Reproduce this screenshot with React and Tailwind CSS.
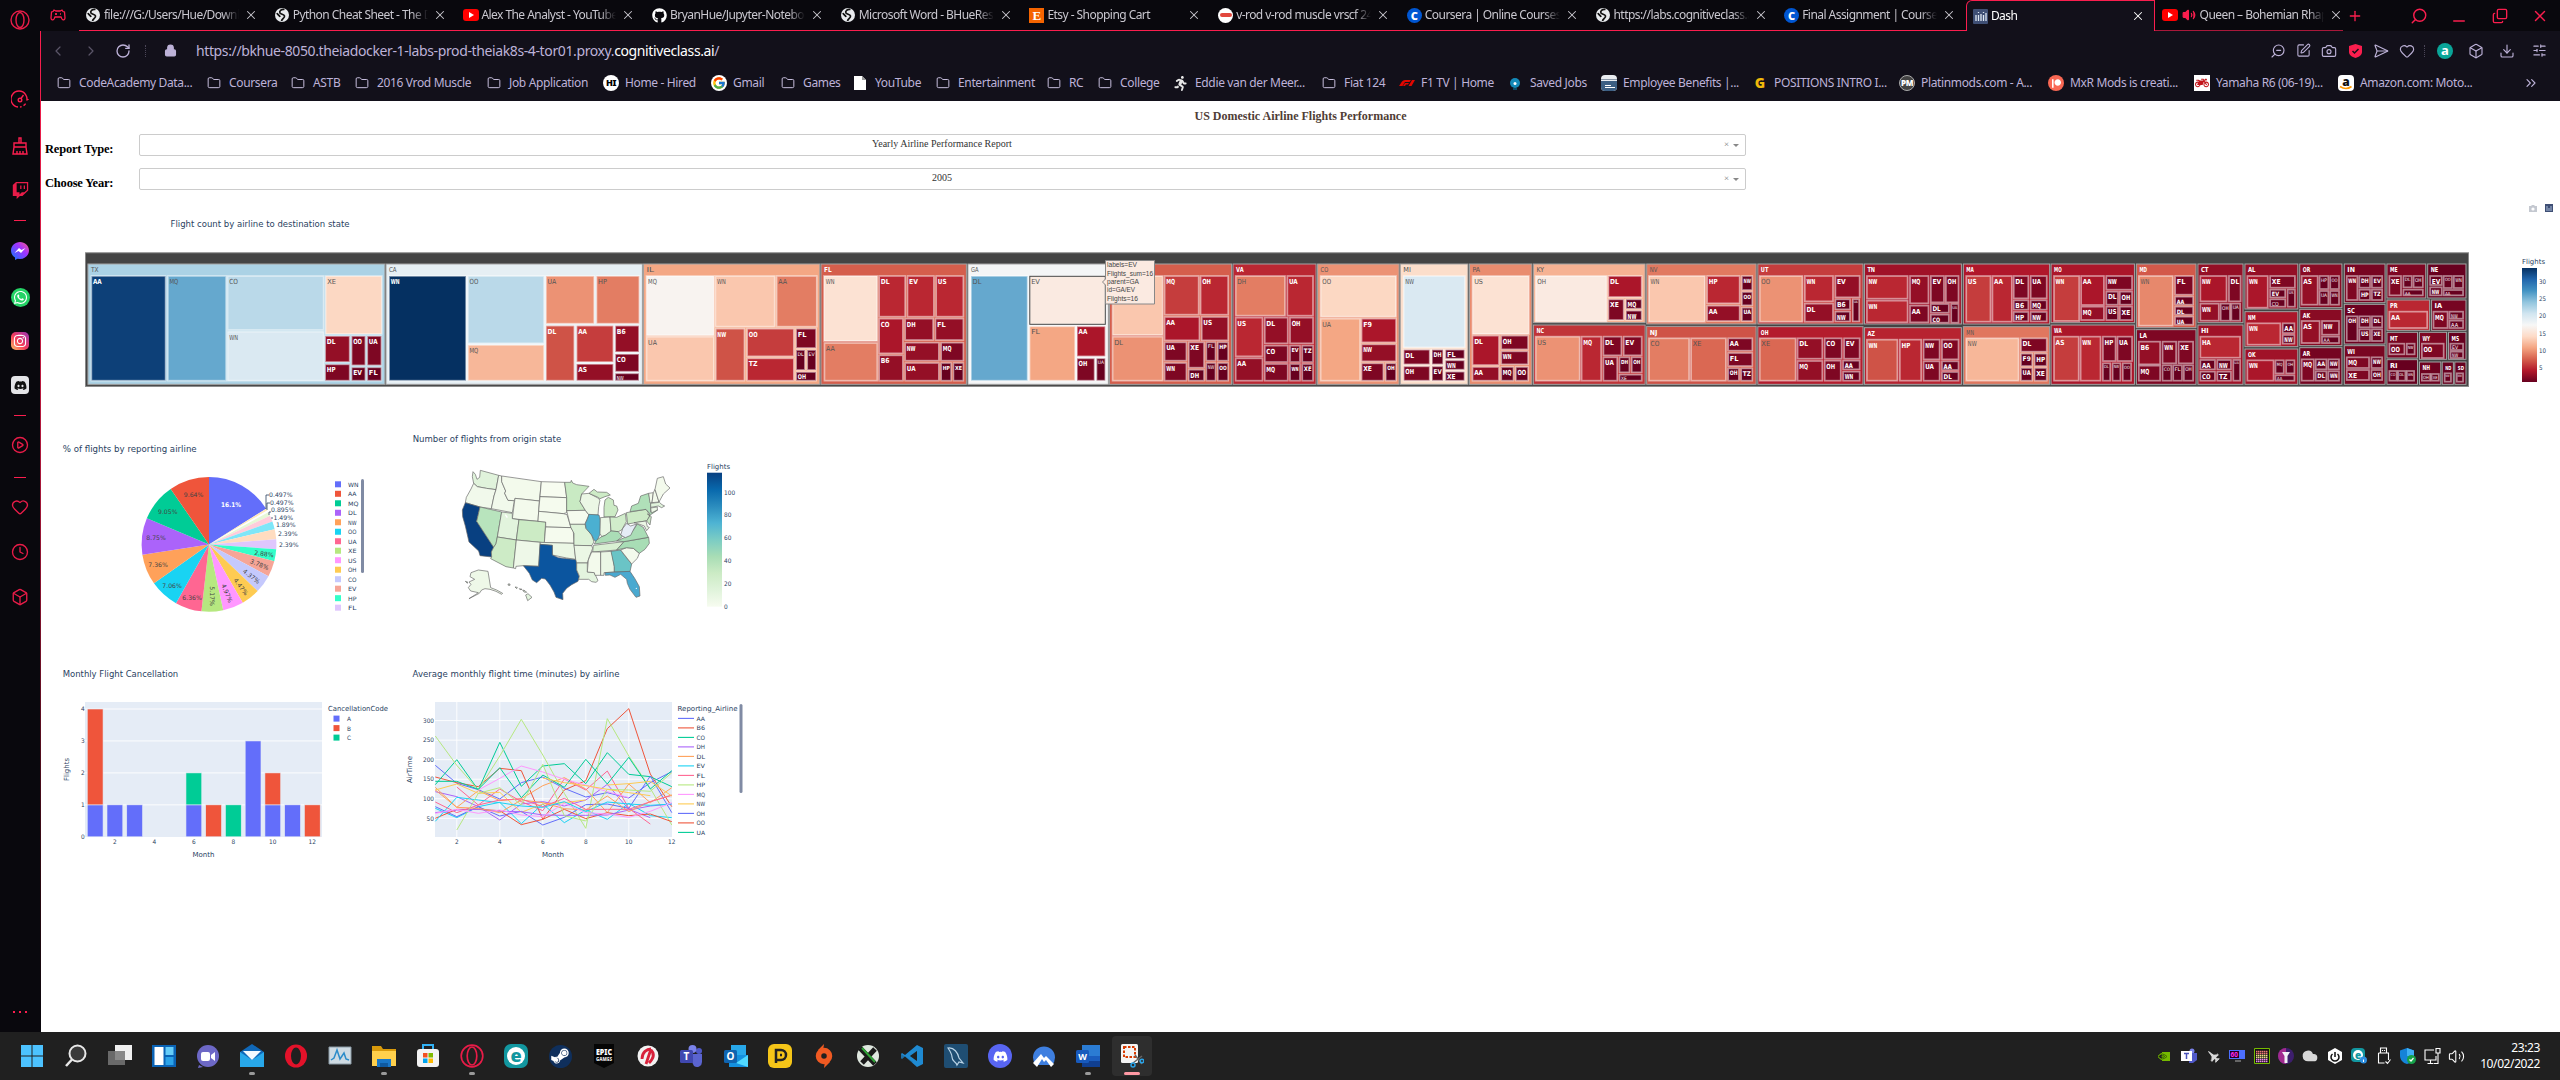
import React from "react";
import {
  FaTwitch, FaFacebookMessenger, FaWhatsapp, FaInstagram, FaDiscord, FaGithub, FaAmazon, FaSteamSymbol,
  FaPatreon, FaMotorcycle, FaRunning, FaFighterJet,
} from "react-icons/fa";
import { FcGoogle } from "react-icons/fc";
import {
  Heart, Clock, Box, CirclePlay, Lock, RotateCw, ChevronLeft, ChevronRight, ChevronsRight, Folder, Search, X,
  Plus, Minus, Copy, ZoomOut, SquarePen, Camera, SendHorizontal, Download, SlidersHorizontal, Volume2, Cloud,
} from "lucide-react";

/* ---------- colour scale ---------- */
const RDBU = [
  [103, 0, 31], [178, 24, 43], [214, 96, 77], [244, 165, 130], [253, 219, 199], [247, 247, 247],
  [209, 229, 240], [146, 197, 222], [67, 147, 195], [33, 102, 172], [5, 48, 97],
];
function rdbu(v) {
  const t = Math.min(10, Math.max(0, ((v - 1) / 33) * 10));
  const i = Math.min(9, Math.floor(t));
  const c = RDBU[i].map((a, k) => Math.round(a + (RDBU[i + 1][k] - a) * (t - i)));
  return `rgb(${c.join(",")})`;
}

/* ---------- treemap: "name x0 y0 x1 y1 flights", first entry of a row is the state, "_" has no label ---------- */
const WIDE = 600 / 1568;
const NARROW = 760 / 1568;
const STRIPS = [
  { ox: 60, s: WIDE, rows: [
    "TX 73 72 849 433 22.8|AA 82 108 276 422 33|MQ 282 108 434 422 26|CO 438 108 689 270 22|WN 438 275 689 422 20|XE 694 108 841 282 14|DL 693 288 757 366 3|HP 693 373 757 422 2|OO 762 288 798 376 2|UA 803 288 840 376 2|EV 762 382 798 422 1|FL 803 382 840 422 1",
    "CA 852 72 1522 433 19|WN 860 108 1061 422 34|OO 1066 108 1265 310 22|MQ 1066 315 1265 422 12|UA 1270 108 1396 251 10|HP 1402 108 1514 251 9|DL 1270 257 1344 422 7|AA 1350 257 1446 366 6|AS 1350 372 1446 422 3|B6 1451 257 1513 336 3|CO 1451 342 1513 395 2|NW 1451 400 1513 422 1",
  ] },
  { ox: 640, s: WIDE, rows: [
    "IL 9 72 470 433 11|MQ 17 108 193 286 17|UA 17 290 193 422 13|WN 197 108 352 260 13|AA 357 108 462 260 9|NW 198 266 273 422 7|OO 280 266 402 349 6|TZ 280 355 402 422 5|FL 408 266 460 324 2|DL 408 330 431 390 1|EV 437 330 460 390 1|OH 408 396 460 422 1",
    "FL 473 72 853 433 7.5|WN 481 108 620 303 15|AA 482 309 620 422 9|DL 625 108 693 230 5|EV 699 108 768 230 5|US 774 108 845 230 5|CO 625 236 687 340 4|B6 625 346 687 422 3|DH 693 236 766 300 3|FL 772 236 845 300 3|NW 693 308 781 362 3|MQ 787 308 845 362 2|UA 693 369 781 422 3|HP 787 369 813 422 1|XE 819 369 845 422 1",
    "GA 857 72 1224 433 17.8|DL 865 108 1013 422 26|EV 1018 108 1216 253 16|FL 1018 259 1137 422 11|AA 1142 259 1216 349 4|OH 1142 355 1188 422 2|UA 1193 355 1216 422 1",
    "_ 1227 72 1546 433 7.5|_ 1235 108 1366 285 13|DL 1235 290 1366 422 10|MQ 1371 108 1460 224 6|OH 1465 108 1537 224 5|AA 1371 231 1462 301 4|US 1468 231 1537 301 3|UA 1371 307 1428 362 2|WN 1371 369 1428 422 2|XE 1434 307 1474 383 2|DH 1434 389 1474 422 1|FL 1480 307 1504 362 1|HP 1510 307 1537 362 1|NW 1480 369 1504 422 1|OO 1510 369 1537 422 1",
  ] },
  { ox: 1220, s: WIDE, rows: [
    "VA 34 72 251 433 5|DH 41 108 170 227 9|UA 176 108 243 227 5|US 41 233 111 349 5|AA 41 355 111 422 3|DL 117 233 177 310 3|OH 183 233 243 310 3|CO 117 317 177 366 2|MQ 117 372 177 422 2|EV 183 317 209 366 1.5|TZ 215 317 243 366 1|WN 183 372 209 422 1|XE 215 372 243 422 1",
    "CO 255 72 468 433 10|OO 263 108 460 230 14|UA 263 236 366 422 11|F9 370 236 460 307 4|NW 370 313 460 364 3|XE 370 370 427 422 2|OH 433 370 460 422 1",
    "MI 471 72 648 433 14.5|NW 480 108 640 322 20|DL 480 329 548 373 2|OH 480 379 548 422 2|DH 554 329 583 373 1|EV 554 379 583 422 1|FL 589 329 639 356 1|WN 589 361 639 389 1|XE 589 395 639 422 1",
    "PA 652 72 815 433 9.7|US 660 108 807 282 15|DL 660 287 729 375 4|AA 660 381 729 422 3|OH 735 287 805 328 2|WN 735 334 805 373 2|MQ 735 381 767 422 1|OO 773 381 805 422 1",
    "KY 819 72 1111 248 11.7|OH 825 108 1010 244 16|DL 1015 108 1102 171 4|XE 1015 178 1055 240 2|MQ 1061 178 1102 206 1|NW 1061 212 1102 240 1",
    "NC 819 255 1111 433 5.6|US 825 290 940 422 10|MQ 945 290 996 422 5|DL 1002 290 1049 346 2|EV 1055 290 1102 346 2|UA 1002 352 1038 422 2|DH 1044 352 1070 397 1|OH 1076 352 1102 397 1|XE 1044 404 1102 422 1",
    "NV 1115 72 1401 252 8.8|WN 1121 108 1267 245 13|HP 1273 108 1358 190 5|AA 1273 197 1358 243 3|NW 1364 108 1391 150 1|OO 1364 156 1391 196 1|UA 1364 203 1391 243 1",
    "NJ 1115 259 1401 433 7|CO 1121 295 1226 422 9|XE 1231 295 1322 422 8|AA 1328 295 1391 332 2|FL 1328 339 1391 378 2|OH 1328 385 1356 422 1|TZ 1362 385 1391 422 1",
  ] },
  { ox: 1800, s: NARROW, rows: [
    "UT -87 72 130 252 6|OO -83 108 5 245 10|WN 10 108 68 184 5|DL 10 191 68 245 3|EV 73 108 123 172 3|B6 73 178 103 208 1|NW 73 215 103 244 1|UA 109 178 122 244 1",
    "OH -87 260 130 433 4.5|XE -83 295 -9 422 8|DL -5 295 46 356 3|MQ -5 363 46 422 3|CO 51 295 86 356 2|EV 91 295 123 356 2|OH 51 362 84 422 2|AA 89 362 123 388 1|WN 89 395 123 422 1",
    "TN 133 72 333 252 3.5|NW 138 108 222 176 5|WN 138 182 222 247 5|MQ 227 108 265 190 3|AA 227 197 265 247 2|EV 270 108 297 187 2|OH 301 108 327 187 2|DL 270 192 307 218 1|CO 270 224 307 248 1|UA 312 192 327 248 1",
    "AZ 133 263 333 433 4.8|WN 138 299 201 422 7|HP 206 299 250 422 5|NW 255 299 288 358 2|OO 293 299 327 358 2|UA 255 364 288 422 2|AA 293 364 327 390 1|DL 293 396 327 422 1",
    "MA 337 72 515 252 4.2|US 343 108 393 245 6|AA 397 108 437 245 5|DL 441 108 471 175 2|UA 476 108 509 175 2|B6 441 181 471 209 1|MQ 476 181 509 209 1|HP 441 216 471 244 1|NW 476 216 509 244 1",
    "MN 337 260 515 433 8.7|NW 343 295 451 422 12|DL 456 295 509 335 2|F9 456 341 479 378 1|HP 484 341 509 378 1|UA 456 384 479 422 1|XE 484 384 509 422 1",
    "MO 518 72 690 248 4|WN 524 108 576 243 6|AA 580 108 627 195 4|MQ 580 200 627 240 3|NW 632 108 685 149 2|DL 632 155 656 194 1|OH 660 155 685 194 1|US 632 200 656 240 1|XE 660 200 685 240 1",
    "WA 518 255 690 433 4|AS 524 290 575 422 6|WN 579 290 620 422 5|HP 625 290 651 363 2|UA 655 290 685 363 2|DL 625 370 640 422 1|NW 645 370 661 422 1|OO 666 370 683 422 1",
    "MD 694 72 817 263 7.3|WN 699 108 769 257 9.5|FL 774 108 811 164 2|AA 774 170 811 194 1|DL 774 200 811 224 1|UA 774 230 811 254 1",
    "LA 694 269 817 433 2|B6 699 305 743 373 3|MQ 699 377 743 422 2|WN 748 305 776 370 2|XE 781 305 811 370 2|CO 748 376 766 422 1|FL 770 376 788 422 1|OH 792 376 811 422 1",
    "CT 821 72 914 248 3|NW 826 108 880 184 4|DL 885 108 909 184 2|WN 826 191 864 242 3|OH 868 191 887 242 1|UA 890 191 908 242 1",
    "HI 821 255 914 433 3.5|HA 826 290 908 353 5|AA 826 360 856 388 1|NW 861 360 889 388 1|CO 826 395 856 422 1|TZ 861 395 889 422 1|UA 894 360 908 422 1",
    "AL 918 72 1027 207 3|WN 923 108 965 203 4|XE 970 108 1021 143 2|EV 970 149 1001 172 1|CO 970 178 1001 200 1|US 1006 149 1021 200 1",
    "NM 918 215 1027 320 4|WN 923 250 991 314 5|AA 996 250 1020 279 1|NW 996 285 1020 311 1",
    "OK 918 327 1027 433 3.5|WN 923 361 977 422 4|MQ 981 361 998 400 1|OH 1003 361 1020 400 1|AA 981 406 1020 422 1",
    "OR 1031 72 1118 203 2.5|AS 1035 108 1068 194 3|HP 1072 108 1090 147 1|OO 1094 108 1112 147 1|UA 1072 153 1090 194 1|WN 1094 153 1112 194 1",
    "AK 1031 208 1118 317 2.5|AS 1035 243 1072 309 3|NW 1077 243 1112 284 2|AA 1077 290 1112 309 1",
    "AR 1031 323 1118 433 1.6|MQ 1035 358 1060 422 2|AA 1064 358 1086 388 1|NW 1090 358 1112 388 1|DL 1064 394 1086 422 1|WN 1090 394 1112 422 1",
    "IN 1123 72 1207 188 1.7|WN 1128 108 1150 180 2|DH 1154 108 1176 143 1|EV 1180 108 1201 143 1|HP 1154 149 1176 180 1|TZ 1180 149 1201 180 1",
    "SC 1123 193 1207 312 1.2|OH 1128 229 1150 303 1|DH 1154 229 1176 262 1|DL 1180 229 1201 262 1|US 1154 268 1176 303 1|XE 1180 268 1201 303 1",
    "WI 1123 317 1207 433 1.8|MQ 1128 352 1174 384 2|XE 1128 390 1174 420 2|NW 1179 352 1201 384 1|OH 1179 390 1201 420 1",
    "ME 1211 72 1291 174 2|XE 1216 108 1240 166 2|DL 1245 108 1262 142 1|OH 1266 108 1285 142 1|AA 1245 149 1285 166 1",
    "NE 1295 72 1374 174 1|EV 1300 108 1324 135 1|NW 1300 142 1324 166 1|OO 1328 108 1345 144 1|WN 1349 108 1368 144 1|AA 1328 150 1368 166 1",
    "PR 1211 180 1299 271 5|AA 1216 215 1294 264 5",
    "IA 1303 180 1374 271 1.7|MQ 1307 215 1336 264 2|NW 1340 215 1368 236 1|AA 1340 242 1368 264 1",
    "MT 1211 277 1274 354 1.7|OO 1216 311 1247 343 1.7|NW 1252 311 1268 343 1",
    "WY 1278 277 1334 358 2|OO 1283 311 1328 354 2",
    "MS 1338 277 1374 358 1|EV 1342 311 1368 330 1|NW 1342 335 1368 354 1",
    "RI 1211 359 1274 433 1|CO 1216 393 1231 422 1|DL 1234 393 1249 422 1|WN 1252 393 1267 422 1",
    "NH 1278 366 1322 433 1.3|OH 1283 402 1300 422 1|XE 1303 402 1318 422 1",
    "ND 1325 366 1348 433 1|NW 1330 400 1343 425 1",
    "SD 1351 366 1374 433 1|NW 1355 400 1368 425 1",
  ] },
];

function Label({ x, y, w, size = 6, fill = "#2a3f5f", bold, anchor, children, rotate }) {
  return (
    <text
      x={x} y={y} fontSize={size} fill={fill} fontWeight={bold ? 700 : 400} textAnchor={anchor}
      textLength={w} lengthAdjust={w ? "spacingAndGlyphs" : undefined}
      transform={rotate ? `rotate(${rotate} ${x} ${y})` : undefined}
    >
      {children}
    </text>
  );
}

const CHART_FONT = "font-['DejaVu_Sans',sans-serif] block";

function Tile({ t, ox, s, state }) {
  const [name, ...n] = t.split(" ");
  const [a, b, c, d, v] = n.map(Number);
  const x = ox + a * s, y = 240 + b / 3, w = (c - a) * s, h = (d - b) / 3;
  const light = v < 8 || v > 30;
  const full = state ? 6.8 : 7;
  const size = state ? Math.min(full, w / 2) : Math.min(full, (w - 1.5) / 1.5, h * 0.75);
  const len = state ? Math.min(7.6, w - 5) : Math.min(8.8, size * 1.27);
  return (
    <g>
      <rect x={x} y={y} width={w} height={h} fill={rdbu(v)} stroke={state ? "#a3a3a3" : "#fff"} strokeOpacity={state ? 1 : 0.5} strokeWidth={state ? 1 : 1.7} />
      {name !== "_" && (
        <Label x={x + (state ? 3 : Math.min(1.6, w * 0.15))} y={state ? y + 8.2 : y + size + 0.9} size={size}
          w={len} fill={light ? "#fff" : "#555"} bold={light && size > 5.5}>
          {name}
        </Label>
      )}
    </g>
  );
}

function Treemap() {
  return (
    <svg className={CHART_FONT} width="2519" height="212" viewBox="41 198 2519 212">
      <defs>
        <linearGradient id="rdbu" x1="0" y1="1" x2="0" y2="0">
          {RDBU.map((c, i) => <stop key={i} offset={i / 10} stopColor={`rgb(${c.join(",")})`} />)}
        </linearGradient>
      </defs>
      <g fill="#c4c8d0">
        <path d="M2529 206h2l1-1h2l1 1h2v6h-8z" />
        <circle cx="2533" cy="209" r="1.6" fill="#fff" />
      </g>
      <rect x="2545" y="204" width="8" height="8" fill="#3f4f75" />
      <path d="M2547 206v5M2549 208v3M2551 206v5" stroke="#a9bcd8" strokeWidth="1" />
      <Label x="170.5" y="227" size="8.6" w="179">Flight count by airline to destination state</Label>
      <rect x="85.5" y="252.8" width="2383" height="133.6" fill="#444" stroke="#888" />
      {STRIPS.map((st) => st.rows.map((row) => (
        <g key={row}>
          {row.split("|").map((t, i) => <Tile key={i} t={t} ox={st.ox} s={st.s} state={i === 0} />)}
        </g>
      )))}
      <rect x="1029.8" y="276.3" width="75.5" height="48" fill="none" stroke="#444" />
      <path d="M1105.5 260.5h49v43.5h-49v-19l-3-3 3-3z" fill="#fbeae1" stroke="#888" strokeWidth="1" />
      {[["labels=EV", 30, 267], ["Flights_sum=16", 46, 275.5], ["parent=GA", 32, 284], ["id=GA/EV", 28, 292], ["Flights=16", 31, 301]].map(([t, w, y]) => (
        <text key={t} x="1107" y={y} fontSize="7" textLength={w} lengthAdjust="spacingAndGlyphs" fill="#444" fontFamily="Liberation Sans, Arial, sans-serif">{t}</text>
      ))}
      <rect x="2522" y="268" width="15" height="114" fill="url(#rdbu)" />
      <Label x="2522" y="263.5" size="7" w="23">Flights</Label>
      {[[30, 284], [25, 301], [20, 318], [15, 336], [10, 353], [5, 370]].map(([t, y]) => (
        <Label key={t} x="2539" y={y} size="6.3" w={t > 5 ? 7 : 3.6}>{t}</Label>
      ))}
    </svg>
  );
}

/* ---------- pie ---------- */
const PIE = [
  [16.1, "#636efa"], [0.497, "#ffe9bb"], [0.497, "#ffffff"], [0.895, "#e7f8d6"], [1.49, "#ffccdb"], [1.89, "#7ee6f8"],
  [2.39, "#ffdcc0"], [2.39, "#dfc6fd"], [2.88, "#33ffc9"], [3.78, "#f6a597"], [4.37, "#c5c9fd"], [4.47, "#fecb52"],
  [4.97, "#ff97ff"], [5.17, "#b6e880"], [6.36, "#ff6692"], [7.06, "#19d3f3"], [7.36, "#ffa15a"], [8.75, "#ab63fa"],
  [9.05, "#00cc96"], [9.64, "#ef553b"],
];
const PIE_LEGEND = [
  ["WN", "#636efa"], ["AA", "#ef553b"], ["MQ", "#00cc96"], ["DL", "#ab63fa"], ["NW", "#ffa15a"], ["OO", "#19d3f3"], ["UA", "#ff6692"],
  ["XE", "#b6e880"], ["US", "#ff97ff"], ["OH", "#fecb52"], ["CO", "#c5c9fd"], ["EV", "#f6a597"], ["HP", "#33ffc9"], ["FL", "#dfc6fd"],
];
function Pie() {
  const cx = 209, cy = 544.4, r = 67.4;
  let acc = 0;
  const pt = (f) => [cx + r * Math.sin(f * 2 * Math.PI), cy - r * Math.cos(f * 2 * Math.PI)];
  const inside = [
    ["9.64%", 193.5, 497, 0], ["9.05%", 167.7, 514, 0], ["8.75%", 156, 540, 0], ["7.36%", 158, 567, 0], ["7.06%", 172, 588, 0],
    ["6.36%", 192, 600, 0], ["5.17%", 209.5, 596, 90], ["4.97%", 225, 594, 68], ["4.47%", 239, 588, 53], ["4.37%", 250, 578, 38],
    ["3.78%", 258.5, 566.5, 22], ["2.88%", 263.5, 556, 8],
  ];
  const outside = [["0.497%", 269, 497], ["0.497%", 270, 505], ["0.895%", 271, 512.4], ["1.49%", 273.5, 520.2], ["1.89%", 276, 527.2], ["2.39%", 278, 536.2], ["2.39%", 279, 547]];
  return (
    <svg className={CHART_FONT} width="359" height="235" viewBox="41 410 359 235">
      <Label x="62.7" y="452" size="8.6" w="134">% of flights by reporting airline</Label>
      {PIE.map(([v, c], i) => {
        const [x0, y0] = pt(acc / 100);
        acc += v;
        const [x1, y1] = pt(acc / 100);
        return <path key={i} d={`M${cx} ${cy}L${x0} ${y0}A${r} ${r} 0 0 1 ${x1} ${y1}Z`} fill={c} />;
      })}
      <Label x="221" y="507" size="6.4" w="20" fill="#fff" bold>16.1%</Label>
      {inside.map(([t, x, y, a]) => (
        <g key={t} transform={`translate(${x} ${y}) rotate(${a})`}>
          <Label x={-9.7} y={0} size="6.2" w="19.5" fill="#444">{t}</Label>
        </g>
      ))}
      <path d="M266 509V495h3M267 510v-7h3M269 515v-3h2M271 518h2" fill="none" stroke="#2a3f5f" strokeWidth="0.8" />
      {outside.map(([t, x, y], i) => <Label key={i} x={x} y={y} size="6.2" w={i < 3 ? 23.5 : 19.5}>{t}</Label>)}
      {PIE_LEGEND.map(([t, c], i) => (
        <g key={t}>
          <rect x="335" y={481.3 + i * 9.49} width="6" height="6" fill={c} />
          <Label x="348" y={486.8 + i * 9.49} size="6" w={t === "WN" || t === "MQ" ? 10.5 : 8.5}>{t}</Label>
        </g>
      ))}
      <rect x="361" y="479" width="3" height="94" rx="1.5" fill="#808ba4" />
    </svg>
  );
}

/* ---------- choropleth ---------- */
const STATES = [
  ["#e0f3db", "219,155 226,163 231,178 239,172 241,151 296,166 288,209 259,205 232,200 221,190 217,170"],
  ["#f1f9eb", "221,190 232,200 259,205 288,209 282,228 274,266 240,261 196,248 199,232 213,207"],
  ["#084081", "196,248 240,261 230,304 281,382 274,396 275,411 240,407 236,393 207,366 196,318 188,290 187,270"],
  ["#b8e4bd", "240,261 305,276 292,351 288,371 281,382 230,304"],
  ["#f1f9eb", "296,166 305,168 305,185 317,213 314,220 324,241 343,242 337,278 274,266 282,228 288,209"],
  ["#f3faec", "305,168 424,185 418,243 345,235 343,242 324,241 314,220 317,213 305,185"],
  ["#f3faec", "345,235 418,243 414,304 337,296"],
  ["#e2f4dd", "305,276 337,280 337,296 357,299 349,360 292,351"],
  ["#ccebc5", "357,299 437,306 433,368 349,360"],
  ["#cdebc6", "292,351 349,360 340,444 318,440 272,416 275,411 274,396 281,382 288,371"],
  ["#eef8e8", "349,360 421,367 416,439 370,437 348,439 347,446 340,444"],
  ["#f7fcf0", "424,185 494,187 500,233 420,230"],
  ["#f5fbee", "420,230 500,233 500,278 490,281 416,274"],
  ["#f3faec", "416,274 490,281 501,284 513,323 437,321 437,306 414,304"],
  ["#f5fbee", "437,321 513,323 520,335 522,370 433,368"],
  ["#ebf7e5", "421,367 522,370 527,418 500,414 457,405 457,376 420,373"],
  ["#0b559f", "420,373 457,376 457,405 475,413 500,416 530,419 530,450 538,470 534,484 515,494 500,505 488,520 489,539 468,532 462,516 450,495 436,477 425,475 410,488 397,480 388,460 370,437 416,439"],
  ["#c9eac3", "494,187 512,187 514,181 518,189 530,194 567,199 545,222 540,245 556,271 500,272 500,233"],
  ["#f5fbee", "500,272 556,271 567,285 560,300 555,313 510,313"],
  ["#ddf2d8", "510,313 555,313 558,325 575,345 582,366 575,377 522,376 522,340 513,323"],
  ["#ebf7e5", "522,376 575,377 578,385 568,410 562,429 530,429 527,418"],
  ["#e3f4de", "530,429 562,429 562,456 583,458 594,482 588,487 575,485 566,478 536,478 538,468 530,450"],
  ["#ebf7e5", "545,222 567,220 592,233 600,240 596,260 594,285 567,285 556,271 540,245"],
  ["#4bb0d1", "567,283 597,285 601,300 601,340 590,366 582,360 575,345 558,325 556,310 562,298"],
  ["#cdebc6", "615,240 625,232 640,240 642,256 650,258 654,270 645,290 612,291 612,262"],
  ["#cdebc6", "567,220 582,208 592,216 620,217 631,225 615,230 600,236 592,231"],
  ["#ebf7e5", "601,293 630,291 633,335 616,346 605,350 600,340"],
  ["#d1edcb", "630,291 650,292 676,280 679,305 665,330 655,335 633,333"],
  ["#aaddb6", "583,372 590,360 605,350 616,346 633,333 655,335 667,350 650,363"],
  ["#d9f0d3", "580,376 672,365 650,390 578,396"],
  ["#f3faec", "575,396 602,396 602,466 585,466 583,458 562,456 565,420"],
  ["#ebf7e5", "602,396 635,394 643,440 643,456 612,458 612,466 602,466"],
  ["#6ac4c6", "633,394 662,390 672,404 695,432 690,455 643,456 643,440"],
  ["#4aa9d0", "615,458 690,454 704,475 718,500 720,528 708,532 690,508 682,490 680,478 662,463 645,472 630,465 616,466"],
  ["#f3faec", "662,390 680,383 700,385 718,400 712,415 695,432"],
  ["#a8ddb5", "650,390 672,365 746,352 748,370 735,388 718,400 700,385 680,383"],
  ["#aaddb6", "650,363 680,350 700,330 712,312 730,322 745,352 672,365"],
  ["#e5ecf6", "662,345 668,326 680,310 692,318 710,312 700,330 692,346 676,353"],
  ["#cdebc6", "679,278 738,268 750,285 742,302 683,312"],
  ["#b0e0b9", "690,275 695,258 715,250 722,228 746,220 752,250 752,276 773,270 752,284 738,268"],
  ["#c9eac3", "742,282 754,290 750,315 740,303 750,287"],
  ["#ebf7e5", "702,308 738,303 742,320 748,322 740,332 733,318 716,312"],
  ["#f3faec", "746,220 760,218 756,248 750,249"],
  ["#f3faec", "760,218 765,208 777,246 756,248"],
  ["#f3faec", "765,208 772,175 790,170 797,192 810,204 790,222 777,246"],
  ["#e0f3db", "752,250 778,247 786,254 794,258 785,263 775,258 752,262"],
  ["#ebf7e5", "752,264 772,261 772,270 754,279"],
  ["#eef8e8", "213,458 235,450 264,454 272,503 290,510 308,520 305,523 288,514 270,508 255,506 245,510 238,520 207,536 226,524 235,518 212,513 205,503 213,493 207,486 224,478 210,470"],
  ["#e3f4de", "377,525 384,521 396,532 383,542"],
  ["#e3f4de", "368,510 375,512 380,517 372,516"],
  ["#e3f4de", "345,501 352,502 350,506"],
  ["#e3f4de", "324,492 330,492 330,496 325,496"],
  ["#e3f4de", "358,506 366,508 360,509"],
  ["#e3f4de", "196,484 203,486 202,490"],
];
function UsMap() {
  return (
    <svg className={CHART_FONT} width="400" height="235" viewBox="400 410 400 235">
      <defs>
        <linearGradient id="gnbu" x1="0" y1="1" x2="0" y2="0">
          {["#f7fcf0", "#e0f3db", "#ccebc5", "#a8ddb5", "#7bccc4", "#4eb3d3", "#2b8cbe", "#0868ac", "#084081"].map((c, i) => (
            <stop key={c} offset={i / 8} stopColor={c} />
          ))}
        </linearGradient>
      </defs>
      <Label x="412.7" y="442" size="8.6" w="148.5">Number of flights from origin state</Label>
      <g transform="translate(400 420) scale(0.33333)" stroke="#666" strokeWidth="2" strokeLinejoin="round">
        {STATES.map(([c, p], i) => <polygon key={i} points={p} fill={c} />)}
        <path d="M316 284l6 9" stroke="#fff" strokeWidth="4" />
        <circle cx="709" cy="505" r="2" fill="#fff" stroke="none" />
      </g>
      <Label x="707" y="468.5" size="7" w="23">Flights</Label>
      <rect x="707" y="472.7" width="15" height="134" fill="url(#gnbu)" />
      {[["100", 495], ["80", 517], ["60", 540.3], ["40", 563], ["20", 586], ["0", 609]].map(([t, y]) => (
        <Label key={t} x="724" y={y} size="6.2" w={t.length * 3.7}>{t}</Label>
      ))}
    </svg>
  );
}

/* ---------- cancellations ---------- */
const BARS = [
  [1, 0, 1, "#636efa"], [1, 1, 4, "#ef553b"], [2, 0, 1, "#636efa"], [3, 0, 1, "#636efa"], [6, 0, 1, "#636efa"], [6, 1, 2, "#00cc96"],
  [7, 0, 1, "#ef553b"], [8, 0, 1, "#00cc96"], [9, 0, 3, "#636efa"], [10, 0, 1, "#636efa"], [10, 1, 2, "#ef553b"], [11, 0, 1, "#636efa"], [12, 0, 1, "#ef553b"],
];
function Bars() {
  const X = (m) => 114.9 + (m - 2) * 19.74;
  const Y = (v) => 836.8 - v * 31.95;
  return (
    <svg className={CHART_FONT} width="359" height="230" viewBox="41 645 359 230">
      <Label x="62.7" y="677.3" size="8.6" w="115.5">Monthly Flight Cancellation</Label>
      <rect x="85" y="702" width="237" height="135" fill="#e5ecf6" />
      {[1, 2, 3, 4].map((v) => <path key={v} d={`M85 ${Y(v)}H322`} stroke="#fff" strokeWidth="0.9" />)}
      {BARS.map(([m, a, b, c], i) => (
        <rect key={i} x={X(m) - 7.9} y={Y(b)} width="15.8" height={Y(a) - Y(b)} fill={c} stroke="#e5ecf6" strokeWidth="0.6" />
      ))}
      {[0, 1, 2, 3, 4].map((v) => <Label key={v} x="81" y={Y(v) + 2.2} size="6.2" w="3.7">{v}</Label>)}
      {[2, 4, 6, 8, 10, 12].map((v) => <Label key={v} x={X(v) - (v > 9 ? 3.7 : 1.8)} y="844" size="6.2" w={v > 9 ? 7.4 : 3.7}>{v}</Label>)}
      <Label x="192.5" y="856.8" size="7" w="22">Month</Label>
      <Label x="68.5" y="781" size="7" w="23" rotate="-90">Flights</Label>
      <Label x="328" y="710.8" size="7" w="60">CancellationCode</Label>
      {[["A", "#636efa"], ["B", "#ef553b"], ["C", "#00cc96"]].map(([t, c], i) => (
        <g key={t}>
          <rect x="333.5" y={715.6 + i * 9.5} width="6" height="6" fill={c} />
          <Label x="347" y={721 + i * 9.5} size="6" w="4">{t}</Label>
        </g>
      ))}
    </svg>
  );
}

/* ---------- air time: [colour, first month, heights...] ---------- */
const LINES = [
  ["#636efa", 1, 346, 400, 419, 447, 398, 381, 415, 441, 428, 444, 398, 365],
  ["#ef553b", 1, 381, 398, 410, 355, 362, 508, 420, 392, 236, 176, 372, 470],
  ["#00cc96", 1, 404, 329, 420, 277, 409, 348, 341, 401, 308, 373, 380, 410],
  ["#ab63fa", 1, 425, 440, 470, 510, 462, 455, 468, 450, 403, 478, 503],
  ["#ffa15a", 1, 412, 472, 422, 452, 446, 407, 383, 417, 488, 402, 458, 413],
  ["#19d3f3", 1, 475, 503, 470, 457, 521, 462, 518, 480, 508, 460, 497, 503],
  ["#ff6692", 2, 411, 465, 417, 455, 482, 387, 420, 363, 475, 522],
  ["#b6e880", 1, 258, 346, 420, 318, 208, 315, 430, 535, 206, 318, 415, 525],
  ["#ff97ff", 3, 420, 385, 348, 366, 388, 405, 425, 443],
  ["#fecb52", 1, 420, 402, 430, 427, 487, 462, 458, 450],
  ["#636efa", 1, 470, 500, 470, 498, 484, 525, 502, 464, 462, 475, 378, 488],
  ["#ef553b", 1, 505, 478, 478, 482, 524, 508, 478, 506, 488, 497, 492, 515],
  ["#00cc96", 1, 394, 394, 418, 353, 443, 375, 412, 328, 402, 322, 417, 362],
  ["#ab63fa", 1, 488, 480, 478, 484, 485, 495, 496, 496, 495, 480, 468, 462],
  ["#ffa15a", 1, 420, 472, 475, 488, 450, 458, 476, 480, 438, 485, 455, 435],
  ["#19d3f3", 1, 514, 442, 450, 458, 468, 472, 455, 485, 456, 462, 466, 462],
  ["#ff6692", 1, 456, 488, 465, 450, 447, 470, 445, 478, 478, 478, 455, 436],
  ["#b6e880", 2, 540, 430, 413, 465, 343, 497, 513, 418, 420, 424, 368],
  ["#ff97ff", 1, 490, 478, 490, 480, 495, 500, 460, 488, 492, 502, 484, 458],
  ["#fecb52", 6, 384, 398, 407, 418, 428, 437],
  ["#fecb52", 9, 405, 401, 394, 438],
];
const LINE_LEGEND = [
  ["AA", "#636efa"], ["B6", "#ef553b"], ["CO", "#00cc96"], ["DH", "#ab63fa"], ["DL", "#ffa15a"], ["EV", "#19d3f3"], ["FL", "#ff6692"],
  ["HP", "#b6e880"], ["MQ", "#ff97ff"], ["NW", "#fecb52"], ["OH", "#636efa"], ["OO", "#ef553b"], ["UA", "#00cc96"],
];
function Lines() {
  const X = (m) => 435.3 + (m - 1) * 21.5;
  return (
    <svg className={CHART_FONT} width="400" height="230" viewBox="400 645 400 230">
      <Label x="412.6" y="677.3" size="8.6" w="207">Average monthly flight time (minutes) by airline</Label>
      <rect x="435" y="702" width="237" height="135" fill="#e5ecf6" />
      {[50, 100, 150, 200, 250, 300].map((v) => {
        const y = 818.3 - ((v - 50) * 97.7) / 250;
        return (
          <g key={v}>
            <path d={`M435 ${y}H672`} stroke="#fff" strokeWidth="0.9" />
            <Label x={v > 50 ? 423 : 426.5} y={y + 2.2} size="6.2" w={v > 50 ? 11 : 7.4}>{v}</Label>
          </g>
        );
      })}
      {[2, 4, 6, 8, 10, 12].map((m) => (
        <g key={m}>
          {m < 12 && <path d={`M${X(m)} 702V837`} stroke="#fff" strokeWidth="0.9" />}
          <Label x={X(m) - (m > 9 ? 3.7 : 1.8)} y="844" size="6.2" w={m > 9 ? 7.4 : 3.7}>{m}</Label>
        </g>
      ))}
      {LINES.map(([c, first, ...ys], i) => (
        <polyline key={i} fill="none" stroke={c} strokeWidth="1" points={ys.map((y, k) => `${X(first + k)},${650 + y / 3}`).join(" ")} />
      ))}
      <Label x="542" y="856.8" size="7" w="22">Month</Label>
      <Label x="411.5" y="783" size="7" w="27" rotate="-90">AirTime</Label>
      <Label x="677.5" y="710.8" size="7" w="60">Reporting_Airline</Label>
      {LINE_LEGEND.map(([t, c], i) => (
        <g key={i}>
          <path d={`M678 ${718.4 + i * 9.5}h16`} stroke={c} strokeWidth="1.1" />
          <Label x="696.5" y={720.9 + i * 9.5} size="6" w="8.5">{t}</Label>
        </g>
      ))}
      <rect x="739.5" y="704" width="3" height="89" rx="1.5" fill="#808ba4" />
    </svg>
  );
}

/* ---------- browser chrome ---------- */
const Globe = () => (
  <svg width="14" height="14" viewBox="0 0 14 14">
    <circle cx="7" cy="7" r="7" fill="#e8eaed" />
    <path d="M9.500 1.500C6 1 4 3 5 5c1 1.500 4 1 4.500 3S7 10.500 6.500 13M2 5c.500 2 2.500 2 3 4" fill="none" stroke="#111" strokeWidth="1.700" />
  </svg>
);
const YT = () => (
  <span className="flex h-3 w-4 items-center justify-center rounded-[3px] bg-[#f00]">
    <svg width="6" height="6" viewBox="0 0 6 6"><path d="M1 0l5 3-5 3z" fill="#fff" /></svg>
  </span>
);
const CourseraIcon = () => <span className="flex h-[15px] w-[15px] items-center justify-center rounded-full bg-[#0056d2] text-[11px] font-black leading-none text-white">C</span>;
const DashIcon = () => (
  <svg width="15" height="15" viewBox="0 0 15 15"><rect width="15" height="15" rx="1" fill="#3f4f75" /><path d="M3 6v6M5.500 3v1M5.500 6v6M8 5v7M10.500 3v1M10.500 6v6M13 4v8" stroke="#dfe8f3" strokeWidth="1.300" /></svg>
);
const TABS = [
  ["file:///G:/Users/Hue/Downloads", <Globe />], ["Python Cheat Sheet - The Data", <Globe />], ["Alex The Analyst - YouTube", <YT />],
  ["BryanHue/Jupyter-Notebooks", <FaGithub size={15} color="#fff" />], ["Microsoft Word - BHueResume", <Globe />],
  ["Etsy - Shopping Cart", <span className="flex h-[15px] w-[15px] items-center justify-center bg-[#f56400] font-['Liberation_Serif',serif] text-[13px] font-bold leading-none text-white">E</span>],
  ["v-rod v-rod muscle vrscf 240", <span className="flex h-[15px] w-[15px] items-center justify-center rounded-full bg-white"><span className="h-1 w-3 rounded-sm bg-[#e2483d]" /></span>],
  ["Coursera | Online Courses &", <CourseraIcon />], ["https://labs.cognitiveclass.ai", <Globe />], ["Final Assignment | Coursera", <CourseraIcon />],
  ["Dash", <DashIcon />], ["Queen – Bohemian Rhapsody", <YT />],
];
const FADE = "[mask-image:linear-gradient(to_right,black_88%,transparent)]";

function TabStrip() {
  return (
    <div className="flex h-[31px] items-stretch bg-[#09080d]">
      <div className="flex w-[39px] items-center pb-px pl-[10px]">
        <svg width="16" height="12" viewBox="0 0 16 12" fill="none" stroke="#fa1e4e" strokeWidth="1.300"><path d="M4 1L3 2.500 1.500 3 1 9c0 2 2 2.500 3 1l1-2h6l1 2c1 1.500 3 1 3-1l-.5-6-1.500-.5L12 1l-2 1H6zM5 5h2M6 4v2M10 5h1" /></svg>
      </div>
      {TABS.map(([t, icon], i) => (
        <div key={t} className={i === 10
          ? "flex w-[188.7px] shrink-0 items-center rounded-tl-md border-l border-r border-t border-[#fa1e4e] bg-[#12101a] pl-[6px] text-white"
          : i === 11
            ? "flex w-[188.7px] shrink-0 items-center border-b border-[#a8183a] pl-[7px] text-[#c9c7cf]"
            : "flex w-[188.7px] shrink-0 items-center border-b border-[#fa1e4e] pl-[7px] text-[#c9c7cf]"}>
          <span className="flex w-[17px] shrink-0 items-center">{icon}</span>
          {i === 11 && <Volume2 size={14} className="ml-[3px] mr-[3px] shrink-0 fill-[#fa1e4e] text-[#fa1e4e]" />}
          <span className={`${FADE} ml-px w-[135px] shrink overflow-hidden whitespace-nowrap text-[12px] tracking-[-0.55px]`}>{t}</span>
          <X size={14} strokeWidth={1.800} className="ml-[5px] shrink-0" />
        </div>
      ))}
      <div className="flex flex-1 items-center text-[#fa1e4e]">
        <Plus size={16} strokeWidth={2} className="ml-[4px]" />
        <Search size={18} strokeWidth={1.900} className="ml-[47px] -scale-x-100" />
        <Minus size={18} strokeWidth={2} className="ml-[22px] mt-2.5" />
        <Copy size={16} strokeWidth={2} className="ml-[24px] -scale-y-100" />
        <X size={18} strokeWidth={1.900} className="ml-[23px]" />
      </div>
    </div>
  );
}

function Toolbar() {
  return (
    <div className="flex h-[39px] items-center text-[#bdb2d8]">
      <div className="flex w-[155px] shrink-0 items-center pl-[9px]">
        <ChevronLeft size={16} strokeWidth={1.800} className="text-[#5b5568]" />
        <ChevronRight size={16} strokeWidth={1.800} className="ml-[17px] text-[#5b5568]" />
        <RotateCw size={16} strokeWidth={2} className="ml-[16px]" />
        <span className="ml-[14px] h-3 w-px border-l border-dotted border-[#4b4658]" />
        <Lock size={13} strokeWidth={2.500} className="ml-[18px] fill-current" />
      </div>
      <span className="w-[2070px] shrink-0 whitespace-nowrap text-[14px] tracking-[-0.38px]">https://bkhue-8050.theiadocker-1-labs-prod-theiak8s-4-tor01.proxy.<span className="text-white">cognitiveclass.ai</span>/</span>
      <ZoomOut size={16} strokeWidth={1.700} className="ml-[4px] shrink-0 -scale-x-100" />
      <SquarePen size={15} strokeWidth={1.700} className="ml-[10px] shrink-0" />
      <Camera size={16} strokeWidth={1.700} className="ml-[10px] shrink-0" />
      <svg width="13" height="14" viewBox="0 0 13 14" className="ml-[12px] shrink-0"><path d="M6.500 0L13 2v6c0 3-3 5-6.500 6C3 13 0 11 0 8V2z" fill="#fa1e4e" /><path d="M3.500 7l2 2 4-4" stroke="#12101a" strokeWidth="1.500" fill="none" /></svg>
      <SendHorizontal size={16} strokeWidth={1.700} className="ml-[11px] shrink-0" />
      <Heart size={16} strokeWidth={1.700} className="ml-[10px] shrink-0" />
      <span className="ml-[9px] h-3 w-px border-l border-dotted border-[#4b4658]" />
      <span className="ml-[12px] flex h-4 w-4 shrink-0 items-center justify-center rounded-full bg-[#0aa598] text-[13px] font-bold leading-none text-white">a</span>
      <Box size={16} strokeWidth={1.700} className="ml-[15px] shrink-0" />
      <Download size={16} strokeWidth={1.700} className="ml-[15px] shrink-0" />
      <SlidersHorizontal size={15} strokeWidth={1.700} className="ml-[17px] shrink-0" />
    </div>
  );
}

const Fold = () => <Folder size={14} strokeWidth={1.700} className="text-[#c9c0e0]" />;
const MARKS = [
  ["CodeAcademy Data...", 150, <Fold />], ["Coursera", 84, <Fold />], ["ASTB", 64, <Fold />], ["2016 Vrod Muscle", 132, <Fold />], ["Job Application", 116, <Fold />],
  ["Home - Hired", 108, <span className="flex h-4 w-4 items-center justify-center rounded-full bg-white text-[9px] font-black tracking-tighter text-black">HI</span>],
  ["Gmail", 70, <span className="flex h-4 w-4 items-center justify-center rounded-full bg-white"><FcGoogle size={14} /></span>],
  ["Games", 72, <Fold />],
  ["YouTube", 83, <svg width="14" height="16" viewBox="0 0 14 16"><path d="M1 1h8l4 4v10H1z" fill="#fff" /><path d="M9 1v4h4" fill="#999" /></svg>],
  ["Entertainment", 111, <Fold />], ["RC", 51, <Fold />], ["College", 75, <Fold />],
  ["Eddie van der Meer...", 149, <FaRunning size={15} color="#e8e8e8" />], ["Fiat 124", 77, <Fold />],
  ["F1 TV | Home", 109, <svg width="16" height="6" viewBox="0 0 16 6"><path d="M0 6L3 1.500Q4 0 6 0h6l-1.500 2H6L3.500 6zM6 3h4l-1 1.500H7L6 6H4zM13 0h3l-3.500 6h-3z" fill="#e10600" /></svg>],
  ["Saved Jobs", 93, <svg width="14" height="14" viewBox="0 0 14 14"><circle cx="7" cy="7" r="5" fill="#1489b8" /><circle cx="7" cy="7.500" r="1.500" fill="#fff" /><path d="M5 12h4v2H5z" fill="#0b4a66" /></svg>],
  ["Employee Benefits |...", 151, <span className="flex h-4 w-4 flex-col overflow-hidden rounded-sm bg-[#e9edf1]"><span className="mt-1 h-px bg-[#8b98a8]" /><span className="mt-auto flex h-2.5 flex-col justify-center gap-px bg-[#3c5f83] pl-1"><i className="h-px w-1.5 bg-white" /><i className="h-px w-2.5 bg-white" /></span></span>],
  ["POSITIONS INTRO I...", 147, <span className="w-4 text-center text-[14px] font-black leading-none text-[#f0b90b]">G</span>],
  ["Platinmods.com - A...", 149, <span className="flex h-4 w-4 items-center justify-center rounded-full border border-[#aaa] bg-[#444] text-[8px] font-black tracking-tighter text-white">PM</span>],
  ["MxR Mods is creati...", 146, <span className="flex h-4 w-4 items-center justify-center rounded-full bg-[#f96854]"><FaPatreon size={9} color="#fff" /></span>],
  ["Yamaha R6 (06-19)...", 144, <span className="flex h-4 w-4 items-center justify-center bg-white"><FaMotorcycle size={14} color="#c3151b" /></span>],
  ["Amazon.com: Moto...", 183, <span className="flex h-4 w-4 items-center justify-center rounded-sm bg-white"><svg width="16" height="16" viewBox="0 0 16 16"><text x="8" y="10.500" fontSize="12" fontWeight="900" fill="#111" textAnchor="middle">a</text><path d="M2 11.500q6 4 11.500 0" fill="none" stroke="#f90" strokeWidth="1.600" /></svg></span>],
];

/* ---------- side bar ---------- */
const OperaRing = ({ size = 20 }) => (
  <svg width={size} height={size} viewBox="0 0 20 20" fill="none" stroke="#e81c48" strokeWidth="1.400"><circle cx="10" cy="10" r="9" /><ellipse cx="10" cy="10" rx="4" ry="7.500" /></svg>
);
const Bar = () => <span className="h-px w-3 bg-[#fa1e4e]" />;
const SIDE = [
  ["mt-[10px]", <OperaRing />],
  ["mt-[59px]", <svg width="18" height="18" viewBox="0 0 18 18" fill="none" stroke="#fa1e4e" strokeWidth="1.400"><path d="M7 17A8 8 0 119 17M17 9v1" strokeDasharray="38 3 3 2 2 2" /><circle cx="9" cy="10" r="1.800" /><path d="M10 8.500L12.500 5" /></svg>],
  ["mt-[27px]", <svg width="16" height="18" viewBox="0 0 16 18" fill="none" stroke="#fa1e4e" strokeWidth="1.400"><path d="M7 1h2v5H7zM2 6h12v4H2zM2 10L1 17h14l-1-7M5 17v-3M8 17v-3M11 17v-3" /></svg>],
  ["mt-[24px]", <FaTwitch size={17} />],
  ["mt-[10px]", <Bar />],
  ["mt-[11px]", <span className="flex h-[18px] w-[18px] items-center justify-center"><svg width="18" height="18" viewBox="0 0 18 18"><defs><linearGradient id="msg" x1="0" y1="1" x2="1" y2="0"><stop offset="0" stopColor="#0a7cff" /><stop offset=".6" stopColor="#a033ff" /><stop offset="1" stopColor="#ff5c87" /></linearGradient></defs><path d="M9 0c5 0 9 3.700 9 8.500S14 17 9 17l-2.500-.3L4 18v-2.500C1.500 14 0 11.500 0 8.500 0 3.700 4 0 9 0z" fill="url(#msg)" /><path d="M3.500 11L8 6l2.500 2L14.500 6 10 11 7.500 9z" fill="#fff" /></svg></span>],
  ["mt-[26px]", <span className="flex h-[19px] w-[19px] items-center justify-center rounded-full bg-[#25d366]"><FaWhatsapp size={15} color="#fff" /></span>],
  ["mt-[24px]", <span className="flex h-[18px] w-[18px] items-center justify-center rounded-[5px] bg-[linear-gradient(45deg,#fdc468,#f43b5a_45%,#9b36b7)]"><FaInstagram size={14} color="#fff" /></span>],
  ["mt-[24px]", <span className="flex h-[18px] w-[18px] items-center justify-center rounded-[4px] bg-[#e4e4e8]"><FaDiscord size={13} color="#111" /></span>],
  ["mt-[10px]", <Bar />],
  ["mt-[10px]", <CirclePlay size={18} strokeWidth={1.800} />],
  ["mt-[12px]", <Bar />],
  ["mt-[10px]", <Heart size={18} strokeWidth={1.800} />],
  ["mt-[25px]", <Clock size={18} strokeWidth={1.800} />],
  ["mt-[25px]", <Box size={18} strokeWidth={1.800} />],
  ["mt-[395px]", <span className="flex gap-[4px]"><i className="size-[2px] bg-[#fa1e4e]" /><i className="size-[2px] bg-[#fa1e4e]" /><i className="size-[2px] bg-[#fa1e4e]" /></span>],
];

/* ---------- task bar ---------- */
const S = ({ children }) => <svg width="24" height="24" viewBox="0 0 24 24">{children}</svg>;
const APPS = [
  <S><path d="M1 1h10.500v10.500H1zM12.500 1H23v10.500H12.500zM1 12.500h10.500V23H1zM12.500 12.500H23V23H12.500z" fill="#4cc2ff" /></S>,
  <S><circle cx="13.500" cy="9.500" r="8" fill="#3a3a3a" stroke="#e8e8e8" strokeWidth="2" /><path d="M8 15.500l-6 6.500" stroke="#e8e8e8" strokeWidth="2.500" /></S>,
  <S><path d="M7 1h17v15H7z" fill="#f0f0f0" /><path d="M0 7h17v14H0z" fill="#777" opacity=".85" /></S>,
  <S><path d="M0 1h24v22H0z" fill="#0a63b5" /><path d="M2.500 3h9v18h-9z" fill="#fff" /><path d="M13.500 3h8v8h-8z" fill="#66cdf8" /><path d="M13.500 13h8v8h-8z" fill="#2ba3e8" /></S>,
  <S><circle cx="12" cy="12" r="11" fill="#6d68c6" /><path d="M3 21l-1 3 5-1z" fill="#6d68c6" /><rect x="5" y="8" width="9" height="9" rx="2" fill="#fff" /><path d="M15 11l4-3v9l-4-3z" fill="#fff" /></S>,
  <S><path d="M0 8L12 0l12 8v15H0z" fill="#1068b8" /><path d="M0 8l12 8 12-8v15H0z" fill="#28a8ea" /><path d="M3 7h18l-9 9z" fill="#f4faff" /></S>,
  <S><ellipse cx="12" cy="12" rx="11" ry="11.500" fill="#e3122a" /><ellipse cx="12" cy="12" rx="5" ry="8.500" fill="#202020" /></S>,
  <S><path d="M1 3h22v17H1z" fill="#cfdbe3" stroke="#8a9aa5" /><path d="M3 16l3-2 3-8 3 9 4-6 2 6 3 1" fill="none" stroke="#2c8cc9" strokeWidth="1.500" /></S>,
  <S><path d="M0 2h9l2 3h13v17H0z" fill="#d99a0b" /><path d="M0 7h24v15H0z" fill="#ffd04c" /><path d="M5 15h14v8H5z" fill="#1977c8" /><path d="M8 19h8v4H8z" fill="#0f5aa0" /></S>,
  <S><path d="M7 6V1h10v5" fill="none" stroke="#32b2f5" strokeWidth="2" /><rect x="1" y="5" width="22" height="18" rx="3" fill="#f3f3f3" /><path d="M7 9h4.500v4.500H7z" fill="#f25022" /><path d="M12.500 9H17v4.500h-4.500z" fill="#7fba00" /><path d="M7 14.500h4.500V19H7z" fill="#00a4ef" /><path d="M12.500 14.500H17V19h-4.500z" fill="#ffb900" /></S>,
  <OperaRing size={24} />,
  <S><rect width="24" height="24" rx="7" fill="#1297a0" /><circle cx="12" cy="12" r="9" fill="#fff" /><text x="12" y="18" fontSize="18" fontWeight="900" fill="#1297a0" textAnchor="middle">e</text></S>,
  <span className="flex h-[23px] w-[23px] items-center justify-center rounded-full bg-[#0f2f5c]"><FaSteamSymbol size={20} color="#fff" /></span>,
  <S><path d="M2 0h20v19l-10 5-10-5z" fill="#050505" /><text x="12" y="11" fontSize="9" fontWeight="900" fill="#fff" textAnchor="middle" textLength="16" lengthAdjust="spacingAndGlyphs">EPIC</text><text x="12" y="17" fontSize="4.500" fontWeight="900" fill="#ddd" textAnchor="middle">GAMES</text></S>,
  <S><circle cx="12" cy="12" r="10.500" fill="#f2f2f2" /><path d="M6 15c0-7 5-10 9-10M15 5l-5 15M15 6c4 4 2 9-2 13" fill="none" stroke="#d8213b" strokeWidth="2.800" /></S>,
  <S><circle cx="19" cy="7" r="3" fill="#5059c9" /><circle cx="12.500" cy="5" r="4" fill="#7b83eb" /><path d="M8 10h14v8a5 5 0 01-8 4z" fill="#5b64d0" /><rect x="0" y="6" width="13" height="13" rx="1.500" fill="#4048b0" /><text x="6.500" y="16" fontSize="10" fontWeight="700" fill="#fff" textAnchor="middle">T</text></S>,
  <S><path d="M7 1h15v12H7z" fill="#28a8ea" /><path d="M5 11h19v12H5z" fill="#1490df" /><path d="M24 11L12 19l12 4z" fill="#50d9ff" /><rect x="0" y="6" width="13" height="13" rx="1.500" fill="#0f64b0" /><text x="6.500" y="16" fontSize="10" fontWeight="700" fill="#fff" textAnchor="middle">O</text></S>,
  <S><rect width="24" height="24" rx="6" fill="#f5c518" /><path d="M8 19V6h5a5 5 0 010 10H8M12 11h2" fill="none" stroke="#222" strokeWidth="2.500" /></S>,
  <S><circle cx="12" cy="12" r="5.500" fill="none" stroke="#f05a22" strokeWidth="5.500" /><path d="M12 0L6 6l5 1zM12 24l6-6-5-1z" fill="#f05a22" /></S>,
  <S><circle cx="12" cy="12" r="11" fill="#dfe7df" /><path d="M4 4l15 16M19 5L6 19" stroke="#1a1a1a" strokeWidth="5" /><path d="M6 4l13 14" stroke="#2fa336" strokeWidth="2" /></S>,
  <S><path d="M17 1l6 3v16l-6 3L5 12.500 2 15l-1-1V10l1-1 3 2z" fill="#1f8ad2" /><path d="M17 7v10l-7-5zM1 10l12 8-2 1.500L1 14z" fill="#202020" fillOpacity=".25" /><path d="M17 7v10l-7-5z" fill="#202020" /></S>,
  <S><rect x="0" y="0" width="24" height="24" rx="2" fill="#1f4e73" /><path d="M4 4c6-1 10 5 11 10l4 5-4-1-2 3c-1-4-5-3-5-8 0-3-2-6-4-9z" fill="none" stroke="#b9d3e6" strokeWidth="1.200" /></S>,
  <span className="flex h-6 w-6 items-center justify-center rounded-full bg-[#5865f2]"><FaDiscord size={15} color="#fff" /></span>,
  <S><path d="M4 21a11 11 0 1116 0z" fill="#3e7fe0" /><path d="M1 19l8-9 3 4 2-2 8 8-3 3-5-7-2 2-2-3-5 8z" fill="#fff" /></S>,
  <S><path d="M6 1h18v22H6z" fill="#2b7cd3" /><path d="M6 12h18v11H6z" fill="#1a5dbe" /><path d="M6 17h18v6H6z" fill="#103f91" /><rect x="0" y="6" width="13" height="13" rx="1.500" fill="#185abd" /><text x="6.500" y="16" fontSize="9" fontWeight="700" fill="#fff" textAnchor="middle">W</text></S>,
  <S><rect x="1" y="0" width="17" height="19" rx="1.500" fill="#f4f4f4" /><rect x="4" y="3" width="11" height="10" fill="none" stroke="#d83b01" strokeWidth="2" strokeDasharray="2.500 1.500" /><path d="M13 19l9-7M15 11l7 9" stroke="#666" strokeWidth="1.500" /><circle cx="13" cy="21" r="2" fill="none" stroke="#29a3e8" strokeWidth="1.500" /><circle cx="22" cy="17" r="1.800" fill="none" stroke="#29a3e8" strokeWidth="1.500" /></S>,
];
const TRAY = [
  <svg width="12" height="9" viewBox="0 0 12 9"><path d="M4 0h8v9H4z" fill="#76b900" /><path d="M0 4.500Q4-.5 9 4.500 4 9.500 0 4.500zM3 4.500q2-2 4 0-2 2-4 0" fill="none" stroke="#3f6a00" strokeWidth="1" /><path d="M0 4.500Q2 1.500 4 1.500M0 4.500Q2 7.500 4 7.500" fill="none" stroke="#76b900" /></svg>,
  <svg width="16" height="16" viewBox="0 0 16 16"><circle cx="11" cy="3" r="2.500" fill="#7b83eb" /><path d="M9 5h7v7l-4 3H8z" fill="#5059c9" /><path d="M0 3h11v10H0z" fill="#fff" /><path d="M3 5.500h5M5.500 5.500V11" stroke="#4b53bc" strokeWidth="1.500" /></svg>,
  <FaFighterJet size={14} color="#d8d8d8" className="rotate-[225deg]" />,
  <svg width="16" height="14" viewBox="0 0 16 14"><path d="M0 1h16v9H0z" fill="#4c6fff" /><path d="M1 2h9v7H1z" fill="#200020" /><text x="1.500" y="8" fontSize="6.500" fontWeight="700" fill="#ff2bf0">60</text><path d="M6 12h6" stroke="#aaa" /></svg>,
  <svg width="16" height="16" viewBox="0 0 16 16"><path d="M.5.5h15v15H.5z" fill="#111" stroke="#76b900" /><path d="M2 3.500h12M2 5.500h12" stroke="#e77" strokeWidth="1.300" strokeDasharray="1.500 .5" /><path d="M2 7.500h12M2 9.500h12" stroke="#ed8" strokeWidth="1.300" strokeDasharray="1.500 .5" /><path d="M2 11.500h12M2 13.500h12" stroke="#e8e" strokeWidth="1.300" strokeDasharray="1.500 .5" /></svg>,
  <svg width="16" height="16" viewBox="0 0 16 16"><circle cx="8" cy="8" r="8" fill="#3d1e6d" /><path d="M0 8a8 8 0 018-8v16a8 8 0 01-8-8" fill="#a12a8f" /><path d="M4 4h8l-2.500 4v7h-3V8z" fill="#f1f1f6" /></svg>,
  <Cloud size={16} className="fill-[#d8d8d8] text-[#d8d8d8]" />,
  <svg width="14" height="16" viewBox="0 0 14 16"><path d="M7 0l7 4v8l-7 4-7-4V4z" fill="#fff" /><path d="M4.500 6a4 4 0 105 0M7 4v5" stroke="#111" strokeWidth="1.500" fill="none" /></svg>,
  <svg width="16" height="16" viewBox="0 0 16 16"><rect width="14" height="14" rx="4" fill="#1297a0" /><circle cx="7" cy="7" r="5" fill="#fff" /><text x="7" y="10.500" fontSize="10" fontWeight="900" fill="#1297a0" textAnchor="middle">e</text><circle cx="12.500" cy="12" r="3.500" fill="#2f8fe0" /><path d="M12.500 11.500v2.500" stroke="#fff" /></svg>,
  <svg width="14" height="18" viewBox="0 0 14 18" fill="none" stroke="#fff" strokeWidth="1.100"><path d="M3.500 6V1h6v5M1.500 6h10v7M1.500 6v10h6M5.500 3v1M7.500 3v1M8.500 14.500l2 2 3-4" /></svg>,
  <svg width="16" height="16" viewBox="0 0 16 16"><path d="M7 0l7 2.500v5C14 12 11 15 7 16 3 15 0 12 0 7.500v-5z" fill="#1583d8" /><path d="M7 0l7 2.500V8H7z" fill="#3fb0f5" /><circle cx="11.500" cy="11.500" r="4.500" fill="#16a34a" /><path d="M9.500 11.500l1.500 1.500 2.500-3" stroke="#fff" fill="none" strokeWidth="1.200" /></svg>,
  <svg width="17" height="17" viewBox="0 0 17 17" fill="none" stroke="#fff" strokeWidth="1.100"><path d="M10 2H1v10h11V8M6.500 12v3M3.500 15.500h6M12 .5h4v4.500h-4zM14 5v10.500h-4" /></svg>,
  <Volume2 size={17} color="#fff" strokeWidth={1.500} />,
];

function Select({ label, value, pad, gap }) {
  return (
    <div className={gap ? "mt-[12px] flex h-[22px]" : "flex h-[22px]"}>
      <span className="w-[98px] shrink-0 whitespace-nowrap pl-[4px] pt-[7px] text-[12.5px] font-bold leading-[16px] tracking-[-0.2px] text-black">{label}</span>
      <div className="flex w-[1607px] items-center rounded-[2px] border border-[#ccc] text-[10px] text-[#333]">
        <span className={`${pad} whitespace-nowrap pb-[3px]`}>{value}</span>
        <span className="ml-auto text-[9px] text-[#777]">×</span>
        <span className="ml-[4px] mr-[6px] border-x-[3px] border-t-[3px] border-x-transparent border-t-[#888]" />
      </div>
    </div>
  );
}

export default function App() {
  return (
    <div className="flex h-[1080px] w-[2560px] flex-col overflow-hidden bg-white font-['Noto_Sans','Open_Sans',sans-serif]">
      <div className="flex h-[1032px]">
        <aside className="flex w-[40px] shrink-0 flex-col items-center bg-[#09080d] text-[#e81c48]">
          {SIDE.map(([m, icon], i) => <div key={i} className={`${m} flex h-[20px] shrink-0 items-center justify-center`}>{icon}</div>)}
        </aside>
        <div className="flex w-[2520px] flex-col">
          <TabStrip />
          <div className="flex flex-1">
            <div className="w-px shrink-0 bg-[linear-gradient(#fa1e4e,#a8183a_45%,#2a0810_85%,#09080d)]" />
            <div className="flex w-[2519px] flex-col">
              <div className="bg-[#12101a]">
                <Toolbar />
                <div className="flex h-[31px] items-center pb-[5px] pl-[16px] text-[#bdb2d8]">
                  {MARKS.map(([t, w, icon]) => (
                    <div key={t} className="flex shrink-0 items-center" style={{ width: w }}>
                      <span className="flex w-[22px] shrink-0 items-center">{icon}</span>
                      <span className="whitespace-nowrap text-[12px] tracking-[-0.35px]">{t}</span>
                    </div>
                  ))}
                  <ChevronsRight size={16} strokeWidth={1.700} className="ml-[2px]" />
                </div>
              </div>
              <main className="flex flex-1 flex-col bg-white font-['Liberation_Serif',serif]">
                <h1 className="mb-[17px] mt-[7px] h-[9px] text-center text-[12px] font-bold leading-[16px] text-[#503d36]">US Domestic Airline Flights Performance</h1>
                <Select label="Report Type:" value="Yearly Airline Performance Report" pad="ml-[732px]" />
                <Select label="Choose Year:" value="2005" pad="ml-[792px]" gap />
                <div className="mt-[8px]"><Treemap /></div>
                <div className="flex"><Pie /><UsMap /></div>
                <div className="flex"><Bars /><Lines /></div>
              </main>
            </div>
          </div>
        </div>
      </div>
      <footer className="flex h-[48px] shrink-0 items-stretch bg-[#202020] pl-[10px] text-white">
        {APPS.map((a, i) => (
          <div key={i} className="flex w-[44px] flex-col items-center justify-center">
            <div className={i === 25 ? "flex h-[40px] w-[40px] flex-col items-center rounded-[4px] bg-[#2e2e2e] pt-[8px]" : "flex h-[40px] w-[40px] flex-col items-center pt-[8px]"}>
              <span className="flex h-6 w-6 items-center justify-center">{a}</span>
              {[5, 8, 10, 24].includes(i) && <span className="mt-[4px] h-[3px] w-[6px] rounded-full bg-[#9a9a9a]" />}
              {i === 25 && <span className="mt-[4px] h-[3px] w-[16px] rounded-full bg-[#ff99a4]" />}
            </div>
          </div>
        ))}
        <div className="ml-auto flex items-center">
          {TRAY.map((t, i) => <span key={i} className="flex w-[24.4px] items-center justify-center">{t}</span>)}
          <div className="w-[91px] pr-[20px] text-right text-[12px] leading-[16px] tracking-[-0.4px]">
            <div>23:23</div>
            <div>10/02/2022</div>
          </div>
        </div>
      </footer>
    </div>
  );
}
